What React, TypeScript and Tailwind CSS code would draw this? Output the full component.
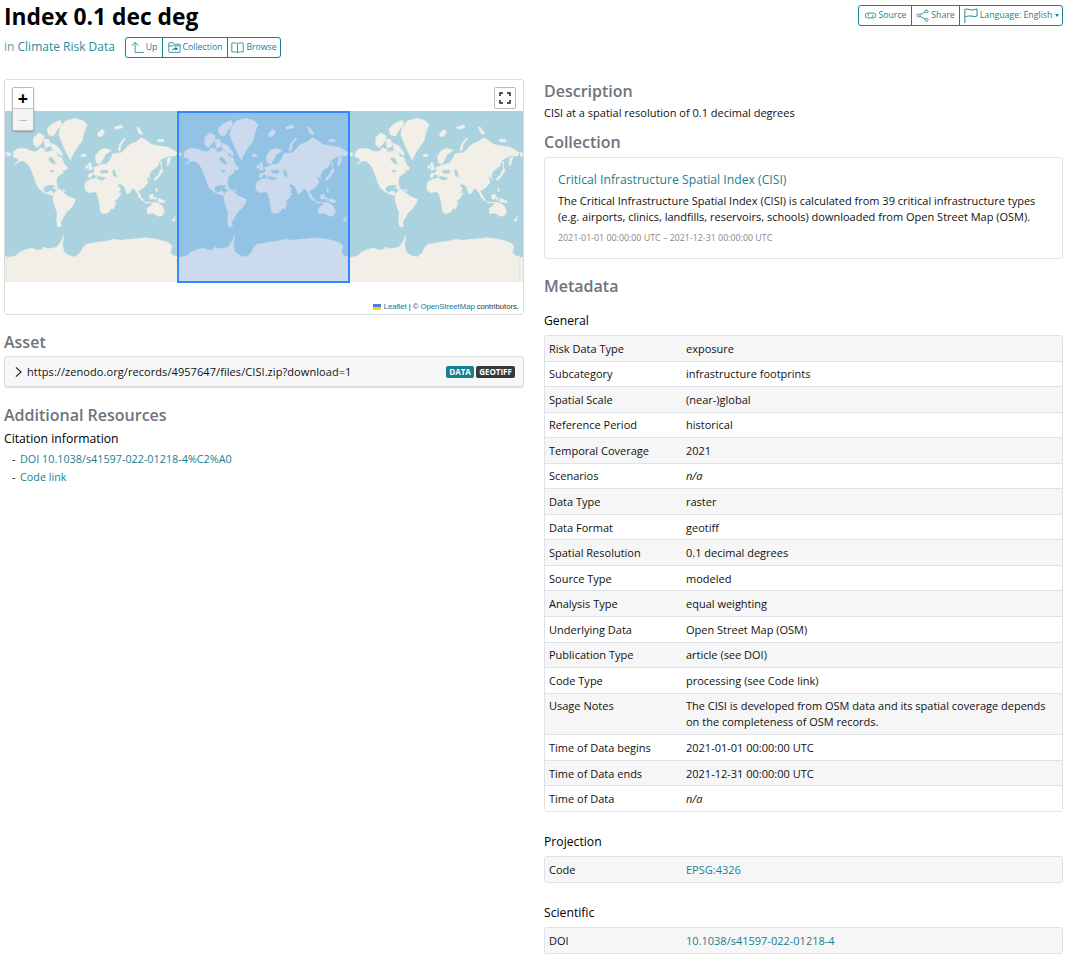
import React from 'react'

// traced at 3x from the tile origin, so the viewBox is 513 wide
const land = [
  // north america, hudson bay and the lakes cut out
  'M20 122 L30 114 L42 112 L60 114 L72 120 L85 122 L95 118 L100 110 L108 115 L112 124 L125 122 L135 118 L148 125 L152 135 L165 140 L172 160 L182 170 L178 178 L165 176 L170 185 L160 190 L150 200 L148 215 L152 232 L146 232 L142 222 L125 222 L112 226 L108 238 L120 246 L128 240 L134 240 L138 250 L148 252 L150 258 L140 254 L125 250 L110 244 L95 232 L88 218 L80 195 L72 175 L65 162 L50 150 L40 150 L22 160 L35 148 L28 140 L18 138 Z M122 140 L135 138 L142 148 L148 160 L138 160 L128 152 Z M128 178 L140 176 L142 184 L130 185 Z',
  // arctic canada
  'M130 95 L150 105 L165 125 L165 135 L150 125 L135 115 Z',
  'M120 55 L135 38 L160 28 L165 40 L150 58 L140 75 L125 72 Z',
  'M80 80 L95 65 L112 75 L105 95 L90 110 L80 100 Z',
  'M110 85 L125 85 L130 105 L115 112 Z',
  'M98 112 L112 114 L118 120 L102 120 Z',
  // greenland
  'M155 70 L160 50 L175 30 L205 22 L230 30 L240 42 L232 60 L225 90 L210 110 L200 125 L190 148 L178 125 L165 95 Z',
  // north atlantic and europe islands
  'M222 130 L236 130 L236 136 L224 137 Z',
  'M0 124 L13 128 L10 134 L0 135 Z',
  'M245 155 L252 156 L256 176 L246 178 Z',
  'M236 164 L243 163 L243 172 L236 172 Z',
  // scandinavia
  'M265 135 L278 118 L293 112 L313 118 L303 125 L295 130 L288 145 L278 160 L268 155 Z',
  // eurasia, black and caspian seas cut out
  'M243 198 L246 188 L258 186 L264 178 L258 170 L272 165 L285 160 L300 158 L310 145 L318 128 L343 125 L351 118 L368 100 L388 92 L403 80 L418 88 L433 100 L458 105 L483 108 L511 125 L505 135 L483 135 L458 148 L453 165 L433 180 L426 195 L430 205 L418 195 L423 215 L408 232 L393 240 L405 262 L398 258 L390 245 L378 230 L368 245 L361 250 L351 225 L338 218 L332 224 L340 232 L336 244 L316 250 L306 240 L296 222 L290 206 L300 200 L275 195 L268 192 L272 205 L262 190 L255 192 L250 200 Z M278 178 L303 176 L303 188 L282 188 Z M315 175 L325 178 L330 200 L318 195 Z',
  // far east
  'M482 140 L492 138 L486 160 L480 165 Z',
  'M460 150 L464 152 L463 172 Z',
  'M441 205 L455 190 L460 178 L465 172 L468 180 L458 195 L445 210 Z',
  // arctic russia
  'M271 68 L285 55 L293 62 L285 75 L275 78 Z',
  'M323 48 L345 42 L348 50 L326 55 Z',
  'M333 118 L338 98 L353 80 L355 84 L343 100 L339 120 Z',
  'M388 48 L396 50 L408 70 L396 68 Z',
  'M451 86 L470 85 L471 92 L453 92 Z',
  // caribbean
  'M137 228 L160 236 L156 239 L140 232 Z',
  'M166 236 L176 238 L170 242 Z',
]

// these were traced against the overlaid tile, which sits 25,20 further in
const south = [
  'M165 268 L172 260 L186 258 L198 268 L208 276 L230 285 L226 298 L216 312 L202 325 L194 340 L186 352 L188 368 L176 366 L174 345 L176 325 L168 305 L163 285 Z',
  'M258 245 L262 232 L275 225 L290 222 L300 226 L318 230 L330 232 L338 250 L348 266 L368 266 L358 282 L345 292 L342 308 L328 325 L312 328 L305 320 L302 295 L295 268 L288 262 L270 265 L260 258 Z',
  'M446 312 L456 304 L466 294 L478 296 L490 304 L498 322 L490 334 L480 336 L462 326 L446 328 Z',
  'M25 460 L50 455 L60 446 L70 440 L85 434 L100 432 L115 437 L130 436 L135 428 L148 433 L160 432 L175 428 L188 410 L195 393 L192 420 L195 440 L205 450 L215 455 L230 458 L245 445 L252 430 L262 420 L280 417 L300 413 L322 411 L345 405 L368 408 L390 405 L415 403 L440 400 L470 404 L495 410 L510 415 L520 425 L515 445 L525 455 L537 455 L537 532 L25 532 Z',
  'M340 298 L352 292 L346 314 L340 312 Z',
  'M420 272 L436 288 L432 290 L418 276 Z',
  'M452 272 L464 270 L464 284 L454 284 Z',
  'M478 282 L500 290 L495 296 L478 292 Z',
  'M438 292 L470 296 L440 296 Z',
  'M472 250 L478 258 L472 262 Z',
  'M466 280 L472 278 L472 290 Z',
  'M520 350 L530 336 L528 350 Z',
]

const WorldTile = () => (
  <svg viewBox="0 0 513 513" className="h-[171px] w-[171px] shrink-0 bg-[#aad3df]">
    <g fill="#f2efe9" stroke="#f2efe9" strokeWidth="1.5" strokeLinejoin="round" fillRule="evenodd">
      {land.map((d, i) => (
        <path key={i} d={d} />
      ))}
      <g transform="translate(-25 -20)">
        {south.map((d, i) => (
          <path key={i} d={d} />
        ))}
      </g>
    </g>
  </svg>
)

const Icon = ({ children }: { children: React.ReactNode }) => (
  <svg viewBox="0 0 16 16" fill="none" stroke="currentColor" strokeWidth="1" className="h-[13px] w-[13px] shrink-0">
    {children}
  </svg>
)

const UpIcon = () => (
  <Icon>
    <path d="M1 6 L5 1.5 L9 6 M5 2 V14 H16" />
  </Icon>
)

const FolderIcon = () => (
  <Icon>
    <path d="M1 13 V3 a1 1 0 0 1 1 -1 h4 l1.5 2 H14 a1 1 0 0 1 1 1 v8 a1 1 0 0 1 -1 1 H2 a1 1 0 0 1 -1 -1 Z M1 6 H15" />
    <path d="M5 12 C5 9.5 7 8.5 9 8.5 V7 L12.5 9.5 L9 12 V10.5 C7.5 10.5 6 11 5 12 Z" fill="currentColor" stroke="none" />
  </Icon>
)

const BookIcon = () => (
  <Icon>
    <path d="M8 3.5 C6.5 2.3 3.5 2 1 2.6 V13.6 C3.5 13 6.5 13.3 8 14.5 C9.5 13.3 12.5 13 15 13.6 V2.6 C12.5 2 9.5 2.3 8 3.5 Z M8 3.5 V14.5" />
  </Icon>
)

const LinkIcon = () => (
  <Icon>
    <path d="M7 5 H4.5 a3 3 0 0 0 0 6 H8 a3 3 0 0 0 2.8 -4 M9 11 H11.5 a3 3 0 0 0 0 -6 H8 a3 3 0 0 0 -2.8 4" />
  </Icon>
)

const ShareIcon = () => (
  <Icon>
    <circle cx="13" cy="2.8" r="1.8" />
    <circle cx="13" cy="13.2" r="1.8" />
    <circle cx="3" cy="8" r="1.8" />
    <path d="M4.6 7.1 L11.4 3.7 M4.6 8.9 L11.4 12.3" />
  </Icon>
)

const FlagIcon = () => (
  <svg viewBox="0 0 16 16" fill="none" stroke="currentColor" strokeWidth="1" className="h-[15px] w-[15px] shrink-0">
    <path d="M2 16 V1.5 C5 0 8 3 11 2 C12.5 1.6 14 1 15 1 V8.5 C12 10 9 8 6 8.5 C4.5 8.8 3 9 2 9.5" />
  </svg>
)

const BtnGroup = ({ items }: { items: { icon: React.ReactNode; label: string; w: string; caret?: boolean }[] }) => (
  <div className="flex h-[21px] rounded-[3px] border border-[#17808f] text-[#17808f]">
    {items.map((it, i) => (
      <div
        key={it.label}
        className={`flex items-center justify-center gap-[2px] text-[8.7px] ${it.w} ${i > 0 ? 'border-l border-[#17808f]' : ''}`}
      >
        {it.icon}
        <span>{it.label}</span>
        {it.caret && <span className="ml-[1px] h-0 w-0 border-x-[2.5px] border-t-[3px] border-x-transparent border-t-[#17808f]" />}
      </div>
    ))}
  </div>
)

const SectionTitle = ({ children, className = '' }: { children: React.ReactNode; className?: string }) => (
  <h2 className={`text-[16px] leading-[22px] font-semibold text-[#6c757d] ${className}`}>{children}</h2>
)

type Row = { k: string; v: React.ReactNode }

const MetaTable = ({ rows, className = '' }: { rows: Row[]; className?: string }) => (
  <div className={`rounded-[3px] border border-[#dee2e6] text-[11px] leading-4 text-[#111] ${className}`}>
    {rows.map((r, i) => (
      <div
        key={r.k}
        className={`flex pt-[4.75px] pr-[4px] pb-[3.8px] pl-[4px] ${i % 2 === 0 ? 'bg-[#f6f6f6]' : 'bg-white'} ${i < rows.length - 1 ? 'border-b border-[#dee2e6]' : ''}`}
      >
        <div className="w-[137px] shrink-0 font-medium">{r.k}</div>
        <div className="flex-1 pr-[8px]">{r.v}</div>
      </div>
    ))}
  </div>
)

const NA = <i className="font-normal">n/a</i>

const general: Row[] = [
  { k: 'Risk Data Type', v: 'exposure' },
  { k: 'Subcategory', v: 'infrastructure footprints' },
  { k: 'Spatial Scale', v: '(near-)global' },
  { k: 'Reference Period', v: 'historical' },
  { k: 'Temporal Coverage', v: '2021' },
  { k: 'Scenarios', v: NA },
  { k: 'Data Type', v: 'raster' },
  { k: 'Data Format', v: 'geotiff' },
  { k: 'Spatial Resolution', v: '0.1 decimal degrees' },
  { k: 'Source Type', v: 'modeled' },
  { k: 'Analysis Type', v: 'equal weighting' },
  { k: 'Underlying Data', v: 'Open Street Map (OSM)' },
  { k: 'Publication Type', v: 'article (see DOI)' },
  { k: 'Code Type', v: 'processing (see Code link)' },
  { k: 'Usage Notes', v: 'The CISI is developed from OSM data and its spatial coverage depends on the completeness of OSM records.' },
  { k: 'Time of Data begins', v: '2021-01-01 00:00:00 UTC' },
  { k: 'Time of Data ends', v: '2021-12-31 00:00:00 UTC' },
  { k: 'Time of Data', v: NA },
]

const App = () => {
  return (
    <div className="min-h-[959px] overflow-hidden bg-white pr-[2px] pl-[4px] font-['Open_Sans','Noto_Sans',sans-serif] text-black">
      <header className="flex justify-between pt-[5px]">
        <div>
          <h1 className="text-[22.8px] leading-[24px] font-bold">Index 0.1 dec deg</h1>
          <div className="mt-[8px] flex items-center">
            <div className="mb-[2px] w-[121px] text-[12px] text-[#6c9aa3]">
              in <span className="text-[#2a8b99]">Climate Risk Data</span>
            </div>
            <BtnGroup
              items={[
                { icon: <UpIcon />, label: 'Up', w: 'w-[36px]' },
                { icon: <FolderIcon />, label: 'Collection', w: 'w-[65px]' },
                { icon: <BookIcon />, label: 'Browse', w: 'w-[53px]' },
              ]}
            />
          </div>
        </div>
        <BtnGroup
          items={[
            { icon: <LinkIcon />, label: 'Source', w: 'w-[52px]' },
            { icon: <ShareIcon />, label: 'Share', w: 'w-[48px]' },
            { icon: <FlagIcon />, label: 'Language: English', w: 'w-[103px]', caret: true },
          ]}
        />
      </header>

      <div className="mt-[21px] flex gap-[20px]">
        <section className="w-[520px] shrink-0">
          <div className="relative h-[236px] overflow-hidden rounded-[3px] border border-[#dddddd] bg-white">
            <div className="absolute top-[31px] left-[-169px] flex">
              <WorldTile />
              <WorldTile />
              <WorldTile />
              <WorldTile />
              <WorldTile />
            </div>
            <div className="absolute top-[31px] left-[172px] h-[172px] w-[173px] border-2 border-[#3388ff] bg-[#3388ff]/20" />
            <div className="absolute top-[7px] left-[7px] w-[22px] overflow-hidden rounded-[2px] border border-[#bbb] shadow-[0_1px_2px_rgba(0,0,0,0.25)]">
              <div className="flex h-[21px] items-center justify-center border-b border-[#ccc] bg-white text-[18px] leading-none font-bold text-black">+</div>
              <div className="flex h-[21px] items-center justify-center bg-[#f4f4f4] text-[16px] leading-none text-[#bbb]">−</div>
            </div>
            <div className="absolute top-[7px] right-[7px] flex h-[22px] w-[22px] items-center justify-center rounded-[2px] border border-[#bbb] bg-white">
              <svg viewBox="0 0 12 12" fill="none" stroke="#222" strokeWidth="1.5" className="h-[12px] w-[12px]">
                <path d="M1 4 V1 H4 M8 1 H11 V4 M11 8 V11 H8 M4 11 H1 V8" />
              </svg>
            </div>
            <div className="absolute right-[4px] bottom-[1px] flex items-center gap-[2px] font-['Liberation_Sans',sans-serif] text-[7.7px] leading-[12px] text-[#333]">
              <span className="mr-[1px] inline-flex h-[6px] w-[8px] flex-col">
                <span className="h-[3px] bg-[#4c7be1]" />
                <span className="h-[3px] bg-[#ffd500]" />
              </span>
              <span className="text-[#0078a8]">Leaflet</span>
              <span>|</span>
              <span>©</span>
              <span className="text-[#0078a8]">OpenStreetMap</span>
              <span>contributors.</span>
            </div>
          </div>

          <SectionTitle className="mt-[16px]">Asset</SectionTitle>
          <div className="mt-[3px] flex h-[32px] items-center rounded-[3px] border border-b-2 border-[#dfdfdf] bg-[#f7f7f7] pt-px pr-[8px] pl-[9px]">
            <svg viewBox="0 0 10 14" fill="none" stroke="#111" strokeWidth="1.2" className="h-[12px] w-[9px] shrink-0">
              <path d="M2 1.5 L8 7 L2 12.5" />
            </svg>
            <span className="ml-[4px] flex-1 text-[11px] tracking-[0.07px] text-[#111]">https://zenodo.org/records/4957647/files/CISI.zip?download=1</span>
            <span className="flex h-[12px] w-[28px] items-center justify-center rounded-[2px] bg-[#17808f] text-[8px] font-bold text-white">DATA</span>
            <span className="ml-[2px] flex h-[12px] w-[39px] items-center justify-center rounded-[2px] bg-[#343a40] text-[8px] font-bold text-white">GEOTIFF</span>
          </div>

          <SectionTitle className="mt-[16px]">Additional Resources</SectionTitle>
          <div className="mt-[3px] text-[12.2px] leading-[20px]">Citation information</div>
          <ul className="mt-[1px] text-[10.8px] leading-[18px]">
            <li className="flex pl-[8px]">
              <span className="w-[8px]">-</span>
              <span className="text-[#17808f]">DOI 10.1038/s41597-022-01218-4%C2%A0</span>
            </li>
            <li className="flex pl-[8px]">
              <span className="w-[8px]">-</span>
              <span className="text-[#17808f]">Code link</span>
            </li>
          </ul>
        </section>

        <section className="w-[519px] shrink-0">
          <SectionTitle className="mt-[1px]">Description</SectionTitle>
          <p className="mt-[3px] text-[11px] leading-4 text-[#111]">CISI at a spatial resolution of 0.1 decimal degrees</p>
          <SectionTitle className="mt-[10px]">Collection</SectionTitle>
          <div className="mt-[4px] h-[102px] rounded-[3px] border border-[#dee2e6] px-[13px] pt-[13px]">
            <div className="text-[12.2px] leading-[18px] text-[#17808f]">Critical Infrastructure Spatial Index (CISI)</div>
            <p className="mt-[4px] text-[11px] leading-4 text-[#111]">
              The Critical Infrastructure Spatial Index (CISI) is calculated from 39 critical infrastructure types (e.g. airports, clinics, landfills, reservoirs, schools) downloaded from Open Street Map (OSM).
            </p>
            <p className="mt-[7px] text-[8.85px] leading-3 text-[#888]">2021-01-01 00:00:00 UTC – 2021-12-31 00:00:00 UTC</p>
          </div>

          <SectionTitle className="mt-[16px]">Metadata</SectionTitle>
          <h3 className="mt-[15px] text-[12.2px] leading-[18px]">General</h3>
          <div className="mt-[5px]">
            <MetaTable rows={general} />
          </div>
          <h3 className="mt-[21px] text-[12.2px] leading-[18px]">Projection</h3>
          <div className="mt-[5px]">
            <MetaTable className="h-[27px] bg-[#f6f6f6]" rows={[{ k: 'Code', v: <span className="text-[#17808f]">EPSG:4326</span> }]} />
          </div>
          <h3 className="mt-[21px] text-[12.2px] leading-[18px]">Scientific</h3>
          <div className="mt-[5px]">
            <MetaTable className="h-[27px] bg-[#f6f6f6]" rows={[{ k: 'DOI', v: <span className="text-[#17808f]">10.1038/s41597-022-01218-4</span> }]} />
          </div>
        </section>
      </div>
    </div>
  )
}

export default App
